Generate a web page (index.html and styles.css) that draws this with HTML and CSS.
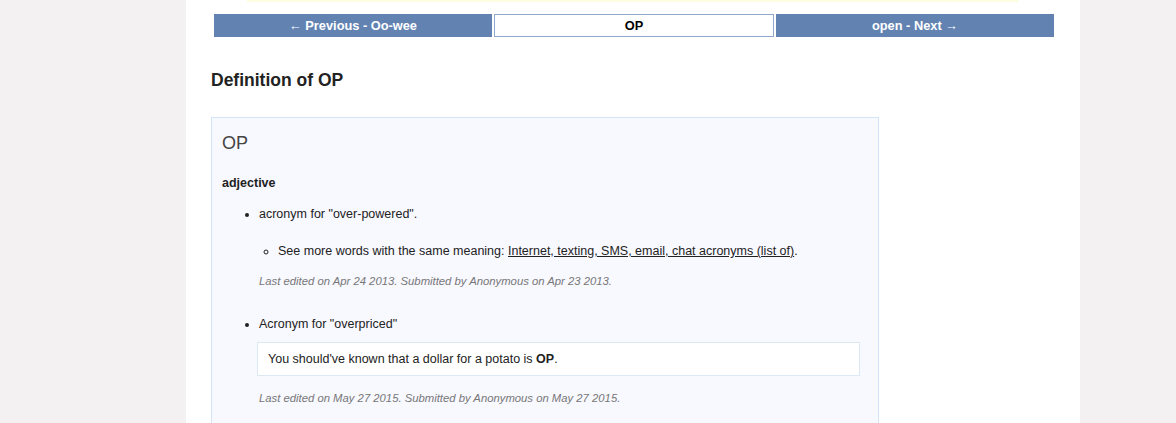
FILE: index.html
```html
<!DOCTYPE html>
<html>
<head>
<meta charset="utf-8">
<link rel="stylesheet" href="styles.css">
</head>
<body>
<div class="page">
  <div class="topstrip"></div>
  <nav class="pager">
    <a class="pbtn" href="#">← Previous - Oo-wee</a>
    <span class="pbtn current">OP</span>
    <a class="pbtn" href="#">open - Next →</a>
  </nav>
  <h2 class="title">Definition of OP</h2>
  <div class="defbox">
    <div class="word">OP</div>
    <div class="pos">adjective</div>
    <ul class="senses">
      <li>
        <div class="sense">acronym for "over-powered".</div>
        <ul class="sub">
          <li>See more words with the same meaning: <a href="#">Internet, texting, SMS, email, chat acronyms (list of)</a>.</li>
        </ul>
        <div class="meta">Last edited on Apr 24 2013. Submitted by Anonymous on Apr 23 2013.</div>
      </li>
      <li class="second">
        <div class="sense">Acronym for "overpriced"</div>
        <div class="example">You should've known that a dollar for a potato is <b>OP</b>.</div>
        <div class="meta">Last edited on May 27 2015. Submitted by Anonymous on May 27 2015.</div>
      </li>
    </ul>
  </div>
</div>
</body>
</html>
```
FILE: styles.css
```css
html, body {
  margin: 0;
  padding: 0;
}
body {
  background: #f3f1f1;
  font-family: "Liberation Sans", Arial, sans-serif;
  color: #222;
  font-size: 12.5px;
}
.page {
  width: 894px;
  margin-left: 186px;
  background: #fff;
  min-height: 423px;
  padding: 0 25px 0 25px;
  box-sizing: border-box;
}
.topstrip {
  height: 2px;
  margin: 0 36px 0 36px;
  background: #fdfde0;
}
.pager {
  display: flex;
  gap: 2px;
  margin: 12px 0 0 3px;
  width: 840px;
}
.pbtn {
  flex: 1;
  height: 23px;
  line-height: 23px;
  text-align: center;
  background: #6283b1;
  color: #fff;
  font-weight: bold;
  font-size: 12.8px;
  text-decoration: none;
  box-sizing: border-box;
}
.pbtn.current {
  background: #fff;
  color: #000;
  border: 1px solid #8fa8cc;
  line-height: 21px;
}
.title {
  font-size: 17.5px;
  font-weight: bold;
  color: #222;
  margin: 32px 0 0 0;
  line-height: 22px;
}
.defbox {
  margin-top: 26px;
  width: 668px;
  box-sizing: border-box;
  background: #f8f8ff;
  border: 1px solid #d3e4f8;
  border-bottom: none;
  padding: 13px 10px 20px 10px;
  min-height: 320px;
}
.word {
  font-size: 18px;
  color: #444;
  line-height: 24px;
}
.pos {
  font-weight: bold;
  margin-top: 20px;
  line-height: 16px;
}
.senses {
  margin: 15px 0 0 0;
  padding-left: 37px;
  list-style: disc;
}
.sense {
  line-height: 16px;
}
.sub {
  list-style: circle;
  margin: 21px 0 0 0;
  padding-left: 19px;
  line-height: 16px;
}
.sub a {
  color: #222;
  text-decoration: underline;
}
.meta {
  font-style: italic;
  font-size: 11.3px;
  color: #777;
  margin-top: 15px;
  line-height: 14px;
}
.second {
  margin-top: 28px;
}
.example {
  margin: 10px 0 0 -2px;
  width: 603px;
  box-sizing: border-box;
  background: #fff;
  border: 1px solid #dde8f5;
  padding: 8px 10px;
  line-height: 16px;
}
.second .meta {
  margin-top: 15px;
}
```
